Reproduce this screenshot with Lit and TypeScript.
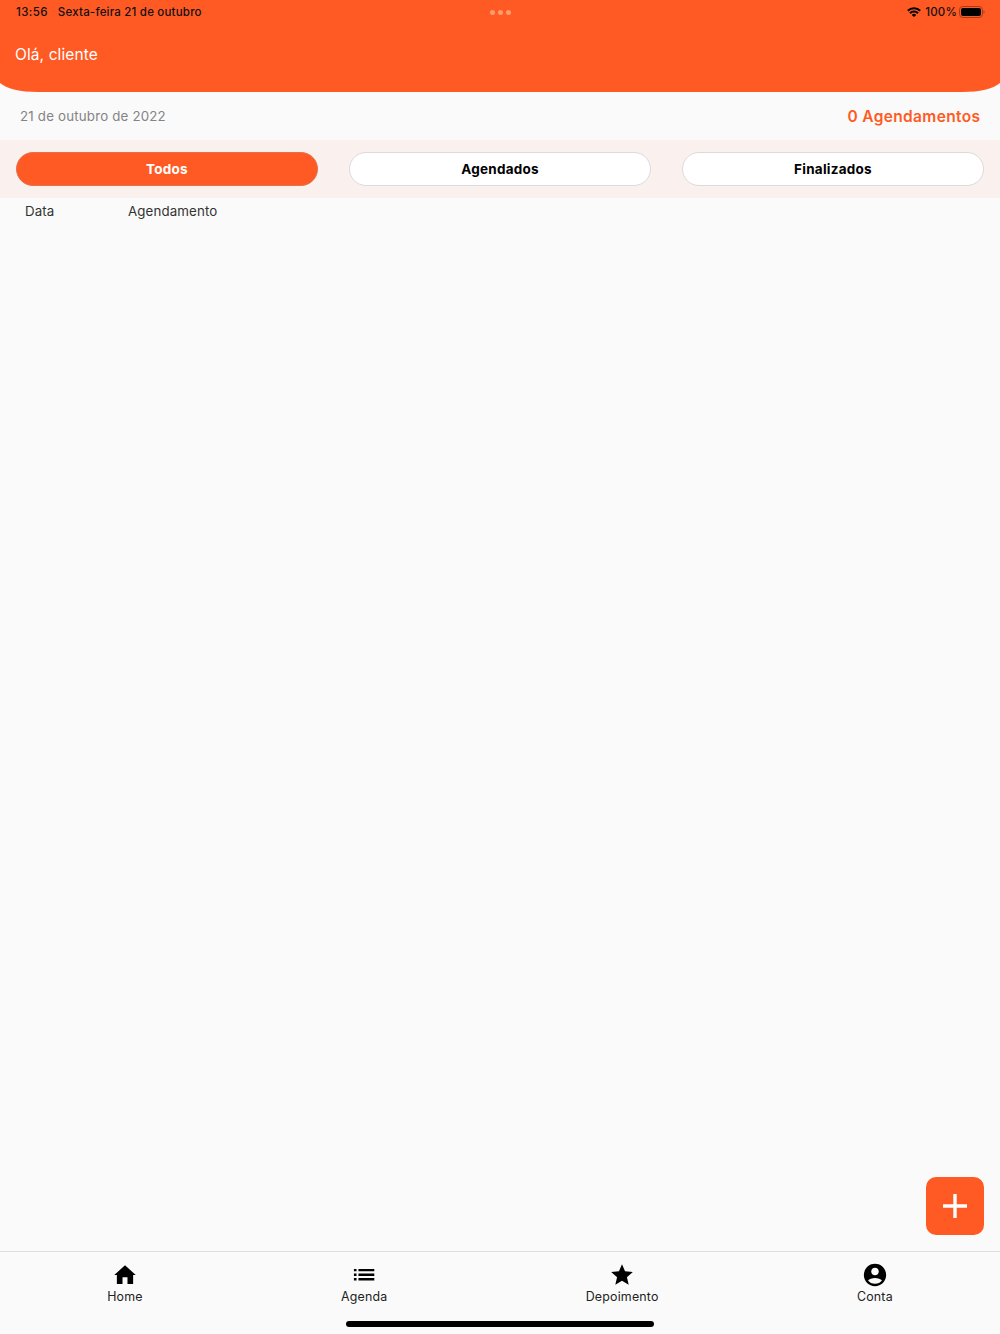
import { LitElement, html, css, svg } from "lit";
import { customElement, property, state } from "lit/decorators.js";
import { classMap } from "lit/directives/class-map.js";

const icons = {
  home: svg`<path d="M9.700 20.200v-6.200h4.600v6.200h5.200v-8.200h2.400L12 3 2.100 12h2.400v8.200z"/>`,
  list: svg`<path d="M2.700 17h2.400v-2.200H2.700zM2.700 12.900h2.400v-2.200H2.700zM2.700 6.400v2.200h2.400V6.400zM6.900 17h14.600v-2.200H6.900zM6.900 12.900h14.600v-2.200H6.900zM6.900 6.400v2.200h14.600V6.400z"/>`,
  star: svg`<path d="M12 17.270 18.180 21l-1.640-7.030L22 9.240l-7.190-.61L12 2 9.190 8.630 2 9.240l5.460 4.730L5.820 21z"/>`,
  account: svg`<path d="M12 1.700C6.310 1.700 1.700 6.310 1.700 12s4.610 10.300 10.300 10.300 10.300-4.610 10.300-10.300S17.690 1.700 12 1.700zm0 3.500c1.940 0 3.500 1.560 3.500 3.500S13.940 12.200 12 12.200 8.500 10.640 8.500 8.700 10.060 5.200 12 5.200zm0 14.900c-2.700 0-5.100-1.280-6.400-3.100.900-1.400 3.900-2.300 6.400-2.300s5.500.900 6.400 2.300c-1.300 1.820-3.700 3.100-6.400 3.100z"/>`,
};

type IconName = keyof typeof icons;

@customElement("nav-item")
class NavItem extends LitElement {
  static styles = css`
    :host { display: flex; flex-direction: column; align-items: center; cursor: pointer; }
    .icon { width: 26px; height: 26px; fill: #000; display: block; }
    .label { padding-top: 1px; font-size: 12.4px; line-height: 16px; letter-spacing: 0.2px; color: #222; white-space: nowrap; }
  `;
  @property() label = "";
  @property() icon: IconName = "home";
  render() {
    return html`
      <svg class="icon" viewBox="0 0 24 24">${icons[this.icon]}</svg>
      <span class="label">${this.label}</span>
    `;
  }
}

@customElement("app-root")
class AppRoot extends LitElement {
  static styles = css`
    :host {
      display: flex; flex-direction: column; width: 100%; height: 1334px;
      box-sizing: border-box; overflow: hidden; position: relative;
      background: #fafafa; color: #222;
      font-family: Inter, "Liberation Sans", sans-serif;
    }
    .header {
      height: 92px; flex: none; background: #ff5a24;
      clip-path: path("M0 0H1000V83Q989 92 962 92H38Q11 92 0 83Z");
    }
    .status {
      display: grid; grid-template-columns: 1fr auto 1fr; align-items: center;
      height: 24px; padding: 0 15px 0 16px; color: #111;
      font-size: 11.5px; font-weight: 500;
    }
    .clock { display: flex; gap: 10px; }
    .time { letter-spacing: 0.4px; }
    .day { letter-spacing: 0.2px; }
    .dots { display: flex; gap: 3px; padding: 1px 1px 0 0; }
    .dot { width: 5px; height: 5px; border-radius: 50%; background: #ff9c70; }
    .indicators { display: flex; justify-content: flex-end; align-items: center; }
    .wifi { width: 14px; height: 10px; margin-right: 4px; }
    .percent { letter-spacing: 0.15px; }
    .battery { width: 26px; height: 12px; margin-left: 2px; }
    .greeting { padding: 20px 15px 0; font-size: 15.5px; letter-spacing: 0.1px; line-height: 22px; color: #fff; }
    .summary {
      display: flex; justify-content: space-between; align-items: center;
      height: 48px; flex: none; box-sizing: border-box; padding: 0 20px 1px;
    }
    .date { font-size: 13.3px; color: #848484; letter-spacing: 0.19px; }
    .count { padding-top: 1px; font-size: 15.5px; letter-spacing: 0.35px; font-weight: 600; color: #ff5a24; margin-right: -0.35px; }
    .filters {
      display: grid; grid-template-columns: repeat(3, 1fr); gap: 31px;
      height: 58px; flex: none; box-sizing: border-box; padding: 12px 16px; background: #faf0ee;
    }
    .filter {
      box-sizing: border-box; height: 34px; border: 1px solid #dcdada; border-radius: 17px;
      background: #fff; color: #000; font: inherit; font-size: 13.5px; font-weight: 700;
      letter-spacing: 0.25px; padding: 0 0 1px; cursor: pointer;
    }
    .filter.active { background: #ff5a24; border-color: #e4714c; color: #fff; }
    .columns {
      display: grid; grid-template-columns: 103px 1fr; flex: none; padding: 5px 25px 0;
      font-size: 13.3px; line-height: 17px; letter-spacing: 0.12px; color: #333;
    }
    .content { flex: 1; display: flex; align-items: flex-end; justify-content: flex-end; padding: 16px; }
    .add {
      width: 58.5px; height: 58.5px; border: 0; border-radius: 10px; background: #ff5a24;
      padding: 0; display: grid; place-items: center; cursor: pointer;
    }
    .plus { width: 24px; height: 24px; }
    .nav {
      display: flex; justify-content: space-around; align-items: flex-start;
      height: 83px; flex: none; box-sizing: border-box; padding: 10px 8px 0; border-top: 1px solid #dedede;
    }
    .home-bar {
      position: absolute; left: 50%; bottom: 7px; transform: translateX(-50%);
      width: 308px; height: 6px; border-radius: 3px; background: #000;
    }
  `;

  @state() private filter = "Todos";

  private filters = ["Todos", "Agendados", "Finalizados"];
  private tabs: { label: string; icon: IconName }[] = [
    { label: "Home", icon: "home" },
    { label: "Agenda", icon: "list" },
    { label: "Depoimento", icon: "star" },
    { label: "Conta", icon: "account" },
  ];

  render() {
    return html`
      <header class="header">
        <div class="status">
          <div class="clock"><span class="time">13:56</span><span class="day">Sexta-feira 21 de outubro</span></div>
          <div class="dots"><i class="dot"></i><i class="dot"></i><i class="dot"></i></div>
          <div class="indicators">
            <svg class="wifi" viewBox="0 0 14 10" fill="none" stroke="#000" stroke-width="2">
              <path d="M.8 3.800a8.700 8.700 0 0 1 12.400 0M3 6.300a5.500 5.500 0 0 1 8 0"/>
              <path d="M7 10 4.800 7.900a3 3 0 0 1 4.400 0z" fill="#000" stroke="none"/>
            </svg>
            <span class="percent">100%</span>
            <svg class="battery" viewBox="0 0 26 12">
              <rect x=".5" y=".5" width="23" height="11" rx="3.200" fill="none" stroke="#a33d1c"/>
              <rect x="2" y="2" width="20" height="8" rx="2" fill="#000"/>
              <path d="M24.700 4.200c1 .400 1 3.200 0 3.600z" fill="#8a3518"/>
            </svg>
          </div>
        </div>
        <div class="greeting">Olá, cliente</div>
      </header>
      <section class="summary">
        <span class="date">21 de outubro de 2022</span>
        <span class="count">0 Agendamentos</span>
      </section>
      <section class="filters">
        ${this.filters.map(
          (f) => html`<button
            class=${classMap({ filter: true, active: f === this.filter })}
            @click=${() => (this.filter = f)}
          >${f}</button>`
        )}
      </section>
      <div class="columns"><span>Data</span><span>Agendamento</span></div>
      <main class="content">
        <button class="add">
          <svg class="plus" viewBox="0 0 24 24" fill="#fff"><path d="M10.300 0h3.400v10.300H24v3.400H13.700V24h-3.400V13.700H0v-3.400h10.300z"/></svg>
        </button>
      </main>
      <nav class="nav">
        ${this.tabs.map((t) => html`<nav-item .label=${t.label} .icon=${t.icon}></nav-item>`)}
      </nav>
      <div class="home-bar"></div>
    `;
  }
}
